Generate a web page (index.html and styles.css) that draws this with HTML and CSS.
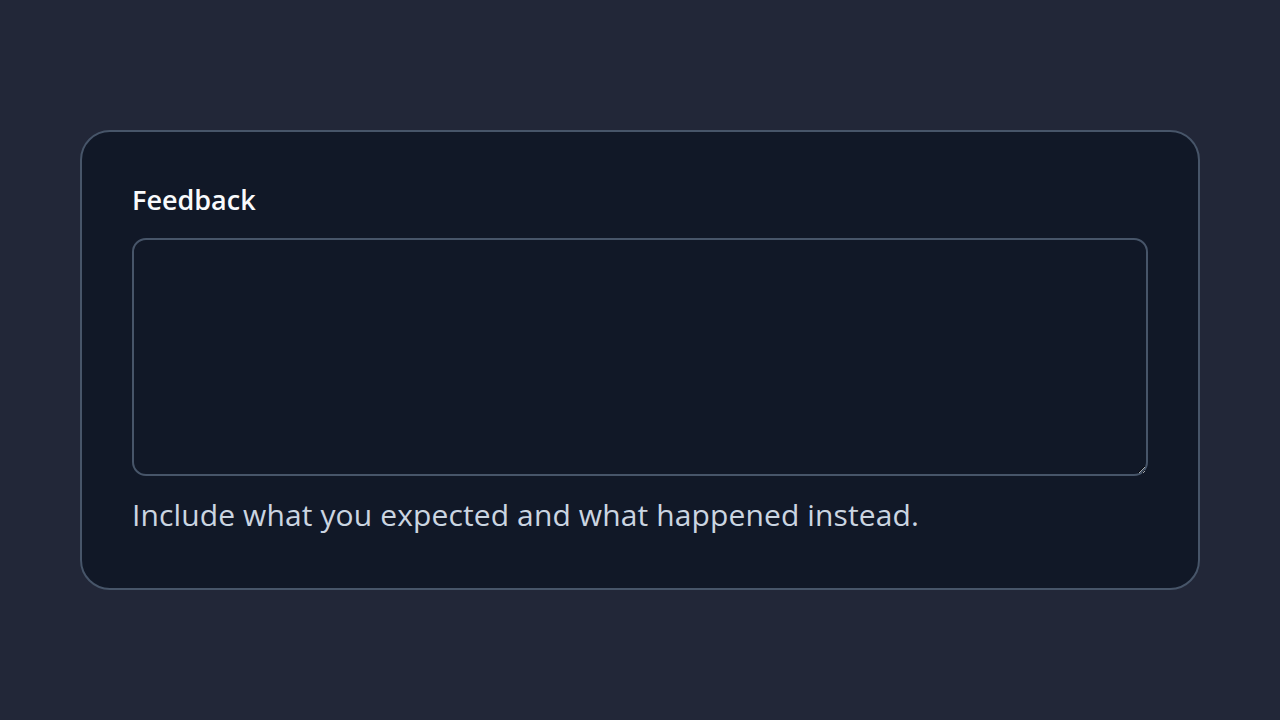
FILE: index.html
```html
<!DOCTYPE html>
<html lang="en">
<head>
<meta charset="utf-8">
<title>Feedback</title>
<link rel="stylesheet" href="styles.css">
</head>
<body>
<main class="page">
  <section class="card">
    <label class="label" for="feedback">Feedback</label>
    <textarea id="feedback" class="field"></textarea>
    <p class="hint">Include what you expected and what happened instead.</p>
  </section>
</main>
</body>
</html>
```
FILE: styles.css
```css
* { box-sizing: border-box; }
html, body { margin: 0; height: 100%; }
body {
  background: #222738;
  font-family: "Open Sans", "Noto Sans", sans-serif;
}
.page {
  height: 720px;
  padding: 130px 80px 0;
}
.card {
  width: 1120px;
  background: #111827;
  border: 2px solid #475569;
  border-radius: 30px;
  padding: 50px 50px 53px;
  display: flex;
  flex-direction: column;
}
.label {
  color: #f8fafc;
  font-size: 27px;
  font-weight: 600;
  line-height: 36px;
  margin-bottom: 20px;
}
.field {
  display: block;
  width: 100%;
  height: 238px;
  background: #111827;
  border: 2px solid #475569;
  border-radius: 14px;
  color: #e2e8f0;
  font: inherit;
  resize: vertical;
  outline: none;
  color-scheme: dark;
}
.hint {
  margin: 19px 0 0;
  color: #cbd5e1;
  font-size: 30px;
  line-height: 40px;
  letter-spacing: 0.12px;
}
```
